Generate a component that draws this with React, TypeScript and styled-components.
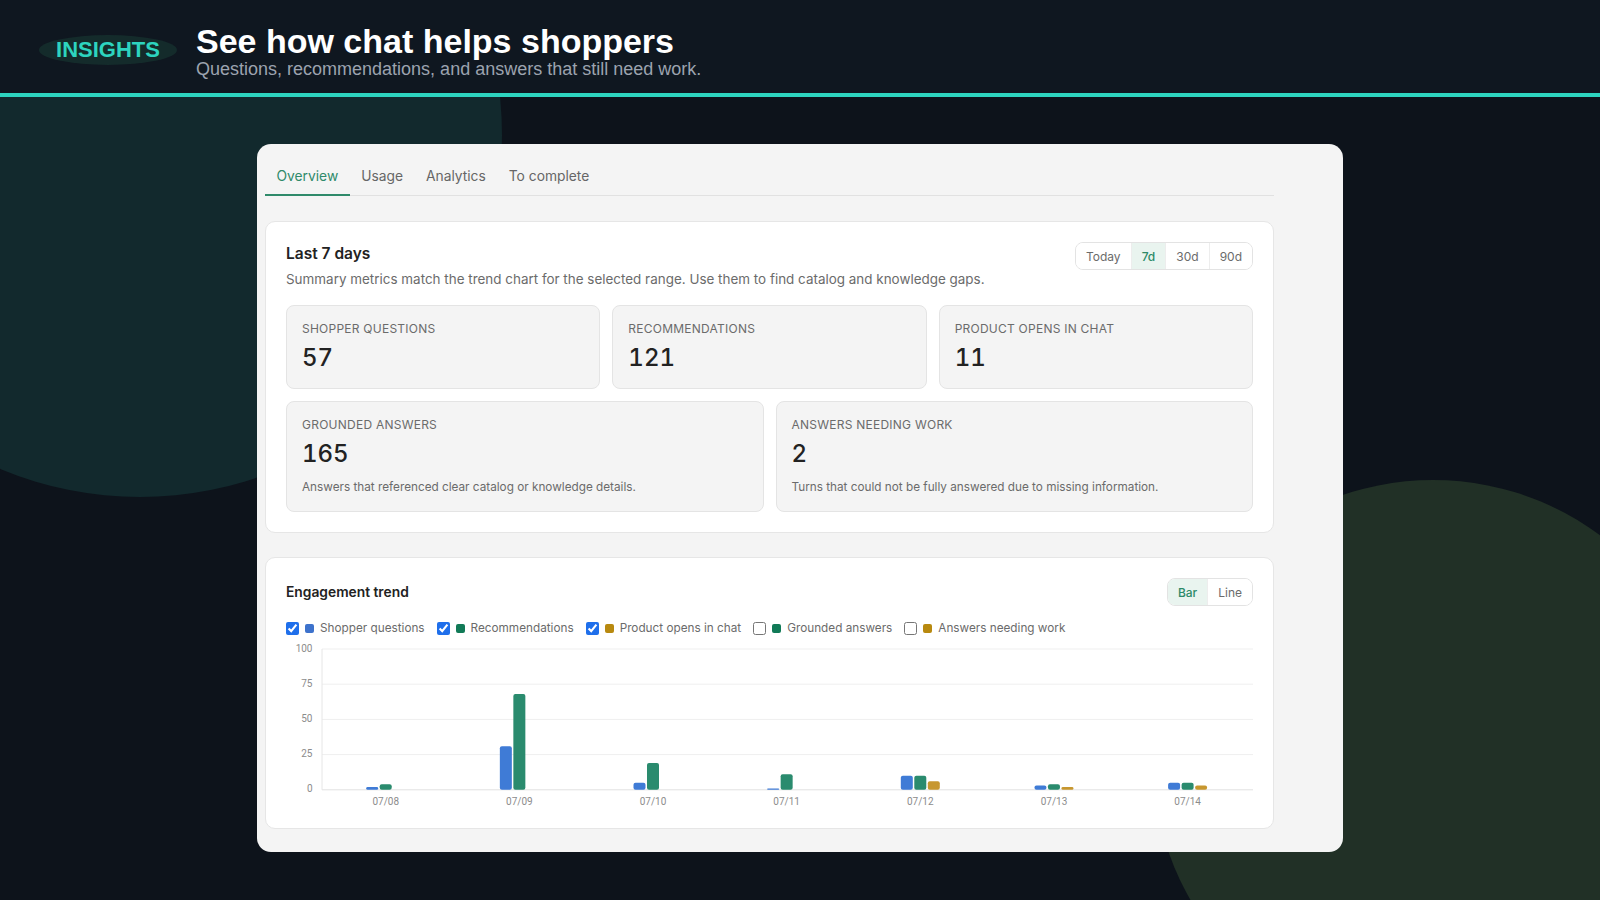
import React from 'react';
import styled, { createGlobalStyle } from 'styled-components';

const GlobalStyle = createGlobalStyle`
  html, body {
    margin: 0;
    padding: 0;
    background: #0d131b;
  }
  body {
    font-family: Inter, "Noto Sans", sans-serif;
  }
  * {
    box-sizing: border-box;
  }
`;

type Series = { key: string; label: string; swatch: string; bar: string; on: boolean };

const SERIES: Series[] = [
  { key: 'q', label: 'Shopper questions', swatch: '#3d72cc', bar: '#3f7bd6', on: true },
  { key: 'r', label: 'Recommendations', swatch: '#117a57', bar: '#2a8b6e', on: true },
  { key: 'p', label: 'Product opens in chat', swatch: '#b8890f', bar: '#c7972f', on: true },
  { key: 'g', label: 'Grounded answers', swatch: '#117a57', bar: '#2a8b6e', on: false },
  { key: 'w', label: 'Answers needing work', swatch: '#b8890f', bar: '#c7972f', on: false },
];

const DAYS = ['07/08', '07/09', '07/10', '07/11', '07/12', '07/13', '07/14'];
const VALUES: Record<string, number[]> = {
  q: [2, 31, 5, 1, 10, 3, 5],
  r: [4, 68, 19, 11, 10, 4, 5],
  p: [0, 0, 0, 0, 6, 2, 3],
};

function TrendChart() {
  const W = 967;
  const H = 167;
  const left = 36;
  const top = 8;
  const base = 148.8;
  const unit = (base - top) / 100;
  const first = 99.7;
  const slot = 133.65;
  const barW = 12;
  const step = 13.5;
  const shown = SERIES.filter((s) => s.on);

  return (
    <svg width="100%" height={H} viewBox={`0 0 ${W} ${H}`}>
      {[100, 75, 50, 25, 0].map((v) => {
        const y = base - v * unit;
        return (
          <g key={v}>
            <line x1={left} x2={W} y1={y} y2={y} stroke={v === 0 ? '#e2e2e2' : '#efefef'} strokeWidth="1" />
            <text x={26.5} y={y} textAnchor="end" dominantBaseline="middle" fontSize="10" fill="#8c8c8c" fontFamily="Roboto, sans-serif">
              {v}
            </text>
          </g>
        );
      })}
      <line x1={left} x2={left} y1={top} y2={base} stroke="#e6e6e6" strokeWidth="1" />
      {DAYS.map((d, i) => {
        const c = first + slot * i;
        const start = c - (shown.length * step - (step - barW)) / 2;
        return (
          <g key={d}>
            {shown.map((s, j) => {
              const v = VALUES[s.key][i];
              if (!v) return null;
              const h = v * unit;
              return (
                <rect key={s.key} x={start + j * step} y={base - h} width={barW} height={h} rx={Math.min(2, h / 2)} fill={s.bar} />
              );
            })}
            <text x={c} y={161} textAnchor="middle" dominantBaseline="middle" fontSize="10" fill="#8c8c8c" fontFamily="Roboto, sans-serif">
              {d}
            </text>
          </g>
        );
      })}
    </svg>
  );
}

export default function App() {
  return (
    <Page>
      <GlobalStyle />
      <Header>
        <Badge>INSIGHTS</Badge>
        <HeaderText>
          <Title>See how chat helps shoppers</Title>
          <Subtitle>Questions, recommendations, and answers that still need work.</Subtitle>
        </HeaderText>
      </Header>

      <Main>
        <Blob $size={724} $left={-222} $top={-324} $color="#12292d" />
        <Blob $size={560} $left={1153} $top={383} $color="#213026" />

        <Panel>
          <Tabs>
            <Tab $active>Overview</Tab>
            <Tab>Usage</Tab>
            <Tab>Analytics</Tab>
            <Tab>To complete</Tab>
          </Tabs>

          <Card>
            <CardHead>
              <div>
                <CardTitle>Last 7 days</CardTitle>
                <CardDesc>
                  Summary metrics match the trend chart for the selected range. Use them to find catalog and knowledge gaps.
                </CardDesc>
              </div>
              <Segmented>
                <Segment>Today</Segment>
                <Segment $active>7d</Segment>
                <Segment>30d</Segment>
                <Segment>90d</Segment>
              </Segmented>
            </CardHead>

            <StatGrid $cols={3} $gapTop={17}>
              <Stat>
                <StatLabel>Shopper questions</StatLabel>
                <StatValue>57</StatValue>
              </Stat>
              <Stat>
                <StatLabel>Recommendations</StatLabel>
                <StatValue>121</StatValue>
              </Stat>
              <Stat>
                <StatLabel>Product opens in chat</StatLabel>
                <StatValue>11</StatValue>
              </Stat>
            </StatGrid>
            <StatGrid $cols={2} $gapTop={12}>
              <Stat>
                <StatLabel>Grounded answers</StatLabel>
                <StatValue>165</StatValue>
                <StatNote>Answers that referenced clear catalog or knowledge details.</StatNote>
              </Stat>
              <Stat>
                <StatLabel>Answers needing work</StatLabel>
                <StatValue>2</StatValue>
                <StatNote>Turns that could not be fully answered due to missing information.</StatNote>
              </Stat>
            </StatGrid>
          </Card>

          <Card $gapTop={24}>
            <CardHead $center>
              <ChartTitle>Engagement trend</ChartTitle>
              <Segmented>
                <Segment $active>Bar</Segment>
                <Segment>Line</Segment>
              </Segmented>
            </CardHead>

            <Legend>
              {SERIES.map((s) => (
                <LegendItem key={s.key}>
                  <Check type="checkbox" checked={s.on} readOnly />
                  <Swatch $color={s.swatch} />
                  {s.label}
                </LegendItem>
              ))}
            </Legend>

            <ChartWrap>
              <TrendChart />
            </ChartWrap>
          </Card>
        </Panel>
      </Main>
    </Page>
  );
}

const Page = styled.div`
  width: 1600px;
  height: 900px;
  overflow: hidden;
  display: flex;
  flex-direction: column;
  background: #0d131b;
`;

const Header = styled.header`
  flex: none;
  height: 97px;
  display: flex;
  align-items: center;
  gap: 19px;
  padding: 6px 0 0 39px;
  background: #0f1720;
  border-bottom: 4px solid #2dd4bf;
  position: relative;
  z-index: 2;
`;

const Badge = styled.div`
  width: 138px;
  height: 30px;
  border-radius: 50%;
  background: #142b2b;
  display: flex;
  align-items: center;
  justify-content: center;
  color: #2dd4bf;
  font: 700 22px/1 "Liberation Sans", Arial, sans-serif;
`;

const HeaderText = styled.div`
  margin-top: 3px;
  font-family: "Liberation Sans", Arial, sans-serif;
`;

const Title = styled.h1`
  margin: 0;
  color: #ffffff;
  font-size: 34px;
  line-height: 34px;
  font-weight: 700;
`;

const Subtitle = styled.p`
  margin: 1px 0 0;
  color: #9ca3af;
  font-size: 18px;
  line-height: 20px;
`;

const Main = styled.main`
  flex: 1;
  position: relative;
  overflow: hidden;
  padding-top: 47px;
`;

const Blob = styled.div<{ $size: number; $left: number; $top: number; $color: string }>`
  position: absolute;
  width: ${(p) => p.$size}px;
  height: ${(p) => p.$size}px;
  left: ${(p) => p.$left}px;
  top: ${(p) => p.$top}px;
  border-radius: 50%;
  background: ${(p) => p.$color};
`;

const Panel = styled.section`
  position: relative;
  z-index: 1;
  width: 1086px;
  margin: 0 auto;
  padding: 12px 69px 23px 8px;
  background: #f4f4f4;
  border-radius: 14px;
`;

const Tabs = styled.nav`
  display: flex;
  border-bottom: 1px solid #e1e1e1;
`;

const Tab = styled.div<{ $active?: boolean }>`
  padding: 10px 11.5px 8px;
  margin-bottom: -1px;
  font-size: 13.8px;
  line-height: 20px;
  color: ${(p) => (p.$active ? '#2f8a6a' : '#666666')};
  border-bottom: 2px solid ${(p) => (p.$active ? '#2f8a6a' : 'transparent')};
`;

const Card = styled.div<{ $gapTop?: number }>`
  margin-top: ${(p) => p.$gapTop ?? 25}px;
  padding: 20px;
  background: #ffffff;
  border: 1px solid #e6e6e6;
  border-radius: 10px;
`;

const CardHead = styled.div<{ $center?: boolean }>`
  display: flex;
  justify-content: space-between;
  align-items: ${(p) => (p.$center ? 'center' : 'flex-start')};
`;

const CardTitle = styled.h2`
  margin: 0;
  padding-top: 1px;
  font-size: 15.5px;
  line-height: 22px;
  font-weight: 600;
  color: #222222;
`;

const CardDesc = styled.p`
  margin: 5px 0 0;
  font-size: 13.45px;
  line-height: 18px;
  color: #6b6b6b;
`;

const ChartTitle = styled.h3`
  margin: 0;
  font-size: 13.8px;
  line-height: 20px;
  font-weight: 600;
  color: #222222;
`;

const Segmented = styled.div`
  display: inline-flex;
  height: 28px;
  border: 1px solid #e3e3e3;
  border-radius: 8px;
  overflow: hidden;
  background: #ffffff;
`;

const Segment = styled.button<{ $active?: boolean }>`
  padding: 0 10px;
  border: none;
  border-left: 1px solid #ededed;
  background: ${(p) => (p.$active ? '#e9f4ef' : '#ffffff')};
  color: ${(p) => (p.$active ? '#2d8a68' : '#6b6b6b')};
  font-family: Inter, sans-serif;
  font-size: 12px;
  font-weight: ${(p) => (p.$active ? 500 : 400)};

  &:first-child {
    border-left: none;
  }
`;

const StatGrid = styled.div<{ $cols: number; $gapTop: number }>`
  display: grid;
  grid-template-columns: repeat(${(p) => p.$cols}, 1fr);
  gap: 12px;
  margin-top: ${(p) => p.$gapTop}px;
`;

const Stat = styled.div`
  padding: 15px;
  background: #f4f4f4;
  border: 1px solid #e4e4e4;
  border-radius: 8px;
`;

const StatLabel = styled.div`
  font-size: 12px;
  line-height: 16px;
  letter-spacing: 0.02em;
  text-transform: uppercase;
  color: #6b6b6b;
`;

const StatValue = styled.div`
  margin-top: 6px;
  font-size: 24px;
  line-height: 30px;
  font-weight: 500;
  font-variant-numeric: tabular-nums;
  color: #222222;
`;

const StatNote = styled.div`
  margin-top: 10px;
  font-size: 11.75px;
  line-height: 17px;
  color: #6b6b6b;
`;

const Legend = styled.div`
  display: flex;
  gap: 12px;
  margin-top: 14px;
`;

const LegendItem = styled.label`
  display: flex;
  align-items: center;
  gap: 6px;
  font-size: 11.75px;
  line-height: 17px;
  color: #6b6b6b;
`;

const Check = styled.input`
  width: 13px;
  height: 13px;
  margin: 0;
  accent-color: #1f6feb;
`;

const Swatch = styled.span<{ $color: string }>`
  width: 9px;
  height: 9px;
  border-radius: 2px;
  background: ${(p) => p.$color};
`;

const ChartWrap = styled.div`
  margin-top: 4px;
  height: 167px;

  svg {
    display: block;
  }
`;
